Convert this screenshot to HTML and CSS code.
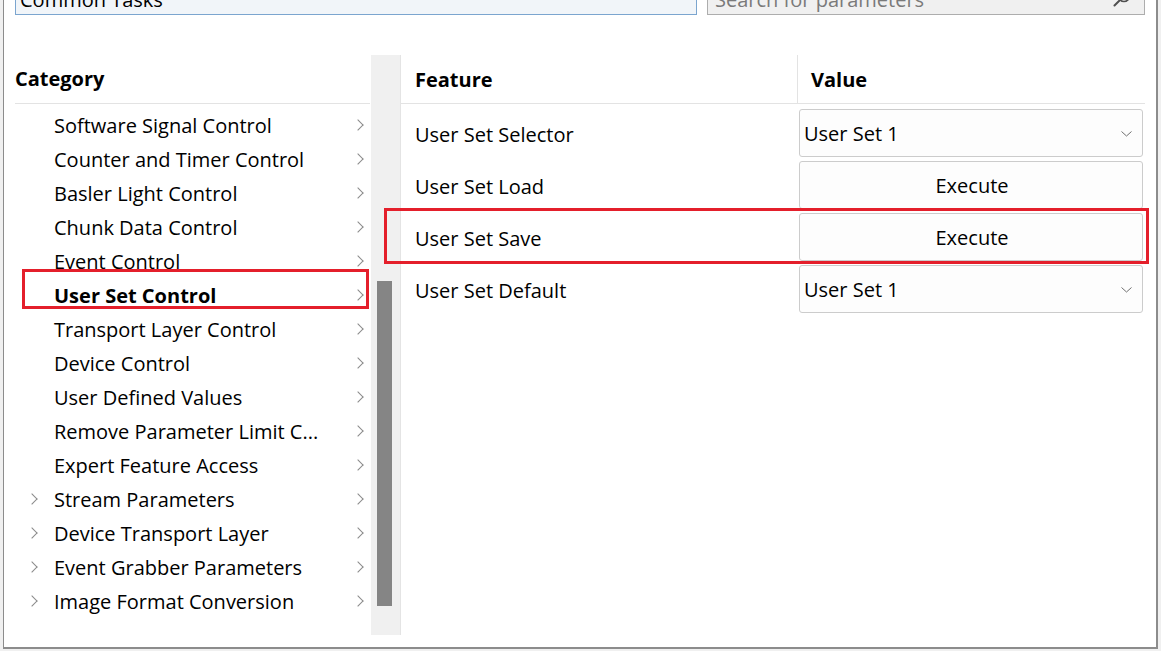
FILE: index.html
```html
<!DOCTYPE html>
<html>
<head>
<meta charset="utf-8">
<link rel="stylesheet" href="styles.css">
</head>
<body>
<div class="panel">
  <div class="topbar">
    <div class="combo">
      <span class="combo-text">Common Tasks</span>
      <svg class="combo-arrow" width="10" height="6" viewBox="0 0 10 6"><path d="M0.5 0.5 L5 5 L9.5 0.5" fill="none" stroke="#606060" stroke-width="1"/></svg>
    </div>
    <div class="search">
      <span class="search-text">Search for parameters</span>
      <svg class="search-icon" width="20" height="20" viewBox="0 0 20 20"><circle cx="12" cy="8" r="5.5" fill="none" stroke="#505050" stroke-width="1.6"/><path d="M8 12 L2.5 17.5" stroke="#505050" stroke-width="2" stroke-linecap="round"/></svg>
    </div>
  </div>
  <div class="main">
    <div class="category">
      <div class="cat-header">Category</div>
      <ul class="cat-list">
        <li class="cat-row"><span class="exp"></span><span class="cat-name">Software Signal Control</span><span class="chev"></span></li>
        <li class="cat-row"><span class="exp"></span><span class="cat-name">Counter and Timer Control</span><span class="chev"></span></li>
        <li class="cat-row"><span class="exp"></span><span class="cat-name">Basler Light Control</span><span class="chev"></span></li>
        <li class="cat-row"><span class="exp"></span><span class="cat-name">Chunk Data Control</span><span class="chev"></span></li>
        <li class="cat-row"><span class="exp"></span><span class="cat-name">Event Control</span><span class="chev"></span></li>
        <li class="cat-row selected"><span class="exp"></span><span class="cat-name">User Set Control</span><span class="chev"></span></li>
        <li class="cat-row"><span class="exp"></span><span class="cat-name">Transport Layer Control</span><span class="chev"></span></li>
        <li class="cat-row"><span class="exp"></span><span class="cat-name">Device Control</span><span class="chev"></span></li>
        <li class="cat-row"><span class="exp"></span><span class="cat-name">User Defined Values</span><span class="chev"></span></li>
        <li class="cat-row"><span class="exp"></span><span class="cat-name">Remove Parameter Limit C...</span><span class="chev"></span></li>
        <li class="cat-row"><span class="exp"></span><span class="cat-name">Expert Feature Access</span><span class="chev"></span></li>
        <li class="cat-row"><span class="exp on"></span><span class="cat-name">Stream Parameters</span><span class="chev"></span></li>
        <li class="cat-row"><span class="exp on"></span><span class="cat-name">Device Transport Layer</span><span class="chev"></span></li>
        <li class="cat-row"><span class="exp on"></span><span class="cat-name">Event Grabber Parameters</span><span class="chev"></span></li>
        <li class="cat-row"><span class="exp on"></span><span class="cat-name">Image Format Conversion</span><span class="chev"></span></li>
      </ul>
    </div>
    <div class="scrollbar"><div class="thumb"></div></div>
    <div class="features">
      <div class="feat-header">
        <div class="col-feature">Feature</div>
        <div class="col-value">Value</div>
      </div>
      <div class="feat-rows">
        <div class="feat-row">
          <div class="feat-name">User Set Selector</div>
          <div class="feat-val"><div class="ctrl dropdown"><span>User Set 1</span><svg width="11" height="6" viewBox="0 0 11 6"><path d="M0.5 0.5 L5.5 5 L10.5 0.5" fill="none" stroke="#707070" stroke-width="1"/></svg></div></div>
        </div>
        <div class="feat-row">
          <div class="feat-name">User Set Load</div>
          <div class="feat-val"><div class="ctrl button">Execute</div></div>
        </div>
        <div class="feat-row">
          <div class="feat-name">User Set Save</div>
          <div class="feat-val"><div class="ctrl button">Execute</div></div>
        </div>
        <div class="feat-row">
          <div class="feat-name">User Set Default</div>
          <div class="feat-val"><div class="ctrl dropdown"><span>User Set 1</span><svg width="11" height="6" viewBox="0 0 11 6"><path d="M0.5 0.5 L5.5 5 L10.5 0.5" fill="none" stroke="#707070" stroke-width="1"/></svg></div></div>
        </div>
      </div>
    </div>
  </div>
  <div class="mark mark-cat"></div>
  <div class="mark mark-save"></div>
</div>
</body>
</html>
```
FILE: styles.css
```css
* { box-sizing: border-box; }
html, body { margin: 0; padding: 0; }
body {
  background: #f0f0f0;
  font-family: "Open Sans", "Noto Sans", "Liberation Sans", sans-serif;
  font-size: 20px;
  color: #000;
}
.panel {
  position: relative;
  margin-left: 3px;
  width: 1155px;
  height: 649px;
  background: #fff;
  border-left: 1px solid #8c8c8c;
  border-right: 2px solid #8c8c8c;
  border-bottom: 2px solid #8c8c8c;
}
.topbar {
  height: 15px;
  overflow: hidden;
  display: flex;
  align-items: flex-end;
  padding-left: 11px;
  gap: 10px;
}
.combo {
  flex: none;
  width: 682px;
  height: 36px;
  border: 1px solid #7ba5cf;
  background: #f1f5f9;
  display: flex;
  align-items: center;
  justify-content: space-between;
  padding: 0 12px 0 4px;
}
.combo-text { line-height: 1; padding-top: 6px; }
.combo-arrow { margin-top: 2px; }
.search {
  flex: none;
  width: 438px;
  height: 36px;
  border: 1px solid #adadad;
  background: #f0f0f0;
  display: flex;
  align-items: center;
  justify-content: space-between;
  padding: 0 12px 0 7px;
  color: #7a7a7a;
}
.search-text { line-height: 1; padding-top: 6px; }
.search-icon { margin-top: 2px; }
.main {
  display: flex;
  margin-top: 40px;
  height: 580px;
}
.category {
  flex: none;
  width: 355px;
  margin-left: 11px;
}
.cat-header {
  height: 49px;
  border-bottom: 1px solid #e3e3e3;
  display: flex;
  align-items: center;
  font-weight: 700;
  padding-bottom: 1px;
}
.cat-list {
  list-style: none;
  margin: 0;
  padding: 4px 0 0 0;
}
.cat-row {
  height: 34px;
  display: flex;
  align-items: center;
}
.exp {
  flex: none;
  width: 39px;
  height: 34px;
  position: relative;
}
.exp.on::after, .chev::after {
  content: "";
  position: absolute;
  width: 7px;
  height: 7px;
  border-top: 1.3px solid #8a8a8a;
  border-right: 1.3px solid #8a8a8a;
  transform: rotate(45deg);
}
.exp.on::after { left: 13px; top: 13px; }
.cat-name { flex: 1; white-space: nowrap; }
.selected .cat-name { font-weight: 700; }
.chev {
  flex: none;
  position: relative;
  width: 16px;
  height: 34px;
}
.chev::after { left: 0px; top: 13px; }
.scrollbar {
  flex: none;
  width: 30px;
  margin-left: 1px;
  background: #f0f0f0;
  border-right: 1px solid #e4e4e4;
  padding-left: 6px;
  padding-top: 226px;
}
.thumb {
  width: 15px;
  height: 325px;
  background: #858585;
}
.features {
  flex: none;
  width: 744px;
}
.feat-header {
  display: flex;
  height: 49px;
  border-bottom: 1px solid #e3e3e3;
  font-weight: 700;
}
.col-feature {
  width: 397px;
  border-right: 1px solid #e3e3e3;
  padding-left: 14px;
  display: flex;
  align-items: center;
}
.col-value {
  flex: 1;
  padding-left: 13px;
  display: flex;
  align-items: center;
}
.feat-rows { padding-top: 4px; }
.feat-row {
  display: flex;
  height: 52px;
}
.feat-name {
  width: 397px;
  padding-left: 14px;
  display: flex;
  align-items: center;
}
.feat-val {
  flex: 1;
  padding: 1px 2px 3px 1px;
}
.ctrl {
  height: 48px;
  border: 1px solid #cccccc;
  border-radius: 3px;
  background: #fdfdfd;
  display: flex;
  align-items: center;
}
.dropdown {
  justify-content: space-between;
  padding: 0 10px 0 4px;
}
.dropdown svg { margin-top: 1px; }
.button {
  justify-content: center;
  padding-left: 2px;
}
.mark {
  position: absolute;
  border: 3px solid #e41f2b;
}
.mark-cat { left: 18px; top: 269px; width: 347px; height: 40px; }
.mark-save { left: 380px; top: 208px; width: 765px; height: 56px; }
```
